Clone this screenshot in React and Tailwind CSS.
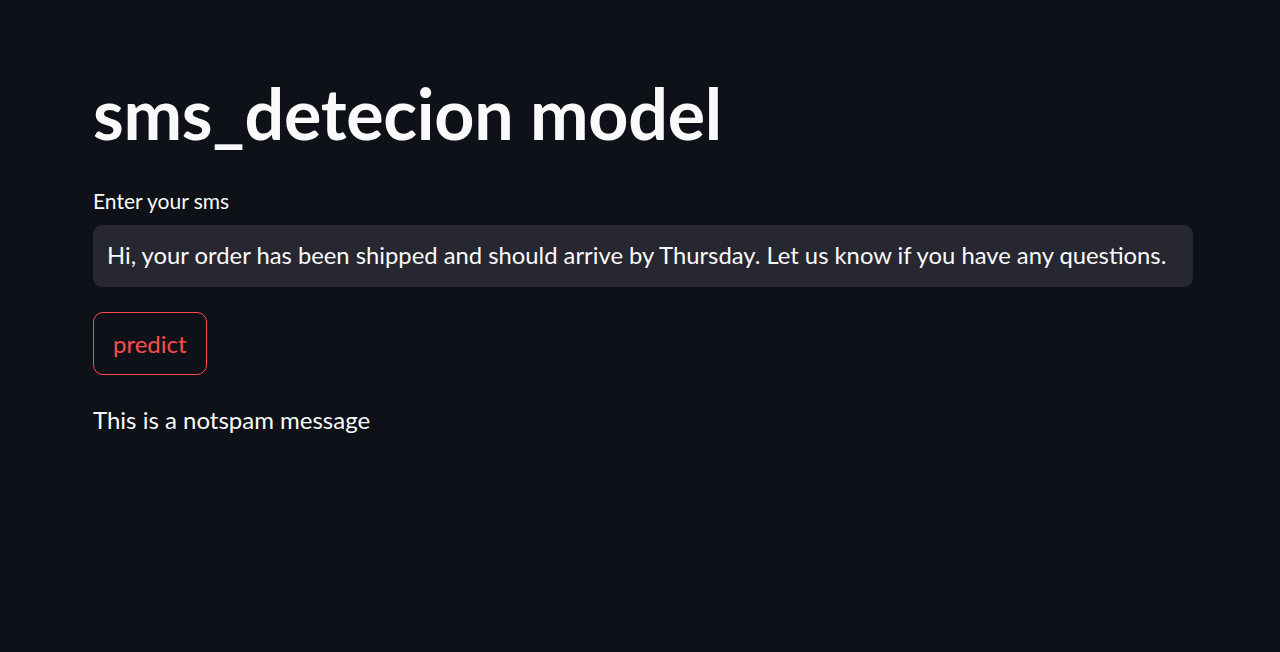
import React from 'react';

const App = () => {
  return (
    <div className="min-h-screen bg-[#0e1117] text-[#fafafa]" style={{ fontFamily: 'Lato, "Noto Sans", sans-serif' }}>
      <div className="pl-[93px] pr-[87px] pt-[65px]">
        {/* Title */}
        <h1 className="text-[70px] font-bold leading-[96px] tracking-[-0.3px]">sms_detecion model</h1>

        {/* Text input */}
        <div className="mt-[26px]">
          <label className="block text-[21px] leading-[28px] mb-[10px]">Enter your sms</label>
          <div className="w-full h-[62px] rounded-[9px] bg-[#262730] flex items-center px-[14px]">
            <span className="text-[23.8px] leading-none">
              Hi, your order has been shipped and should arrive by Thursday. Let us know if you have any questions.
            </span>
          </div>
        </div>

        {/* Button */}
        <button className="mt-[25px] h-[63px] px-[19px] rounded-[10px] border border-[#ff4b4b] bg-[#0e1117] text-[#ff4b4b] text-[24px]">
          predict
        </button>

        {/* Result */}
        <p className="mt-[27px] text-[24px] leading-[36px]">This is a notspam message</p>
      </div>
    </div>
  );
};

export default App;
